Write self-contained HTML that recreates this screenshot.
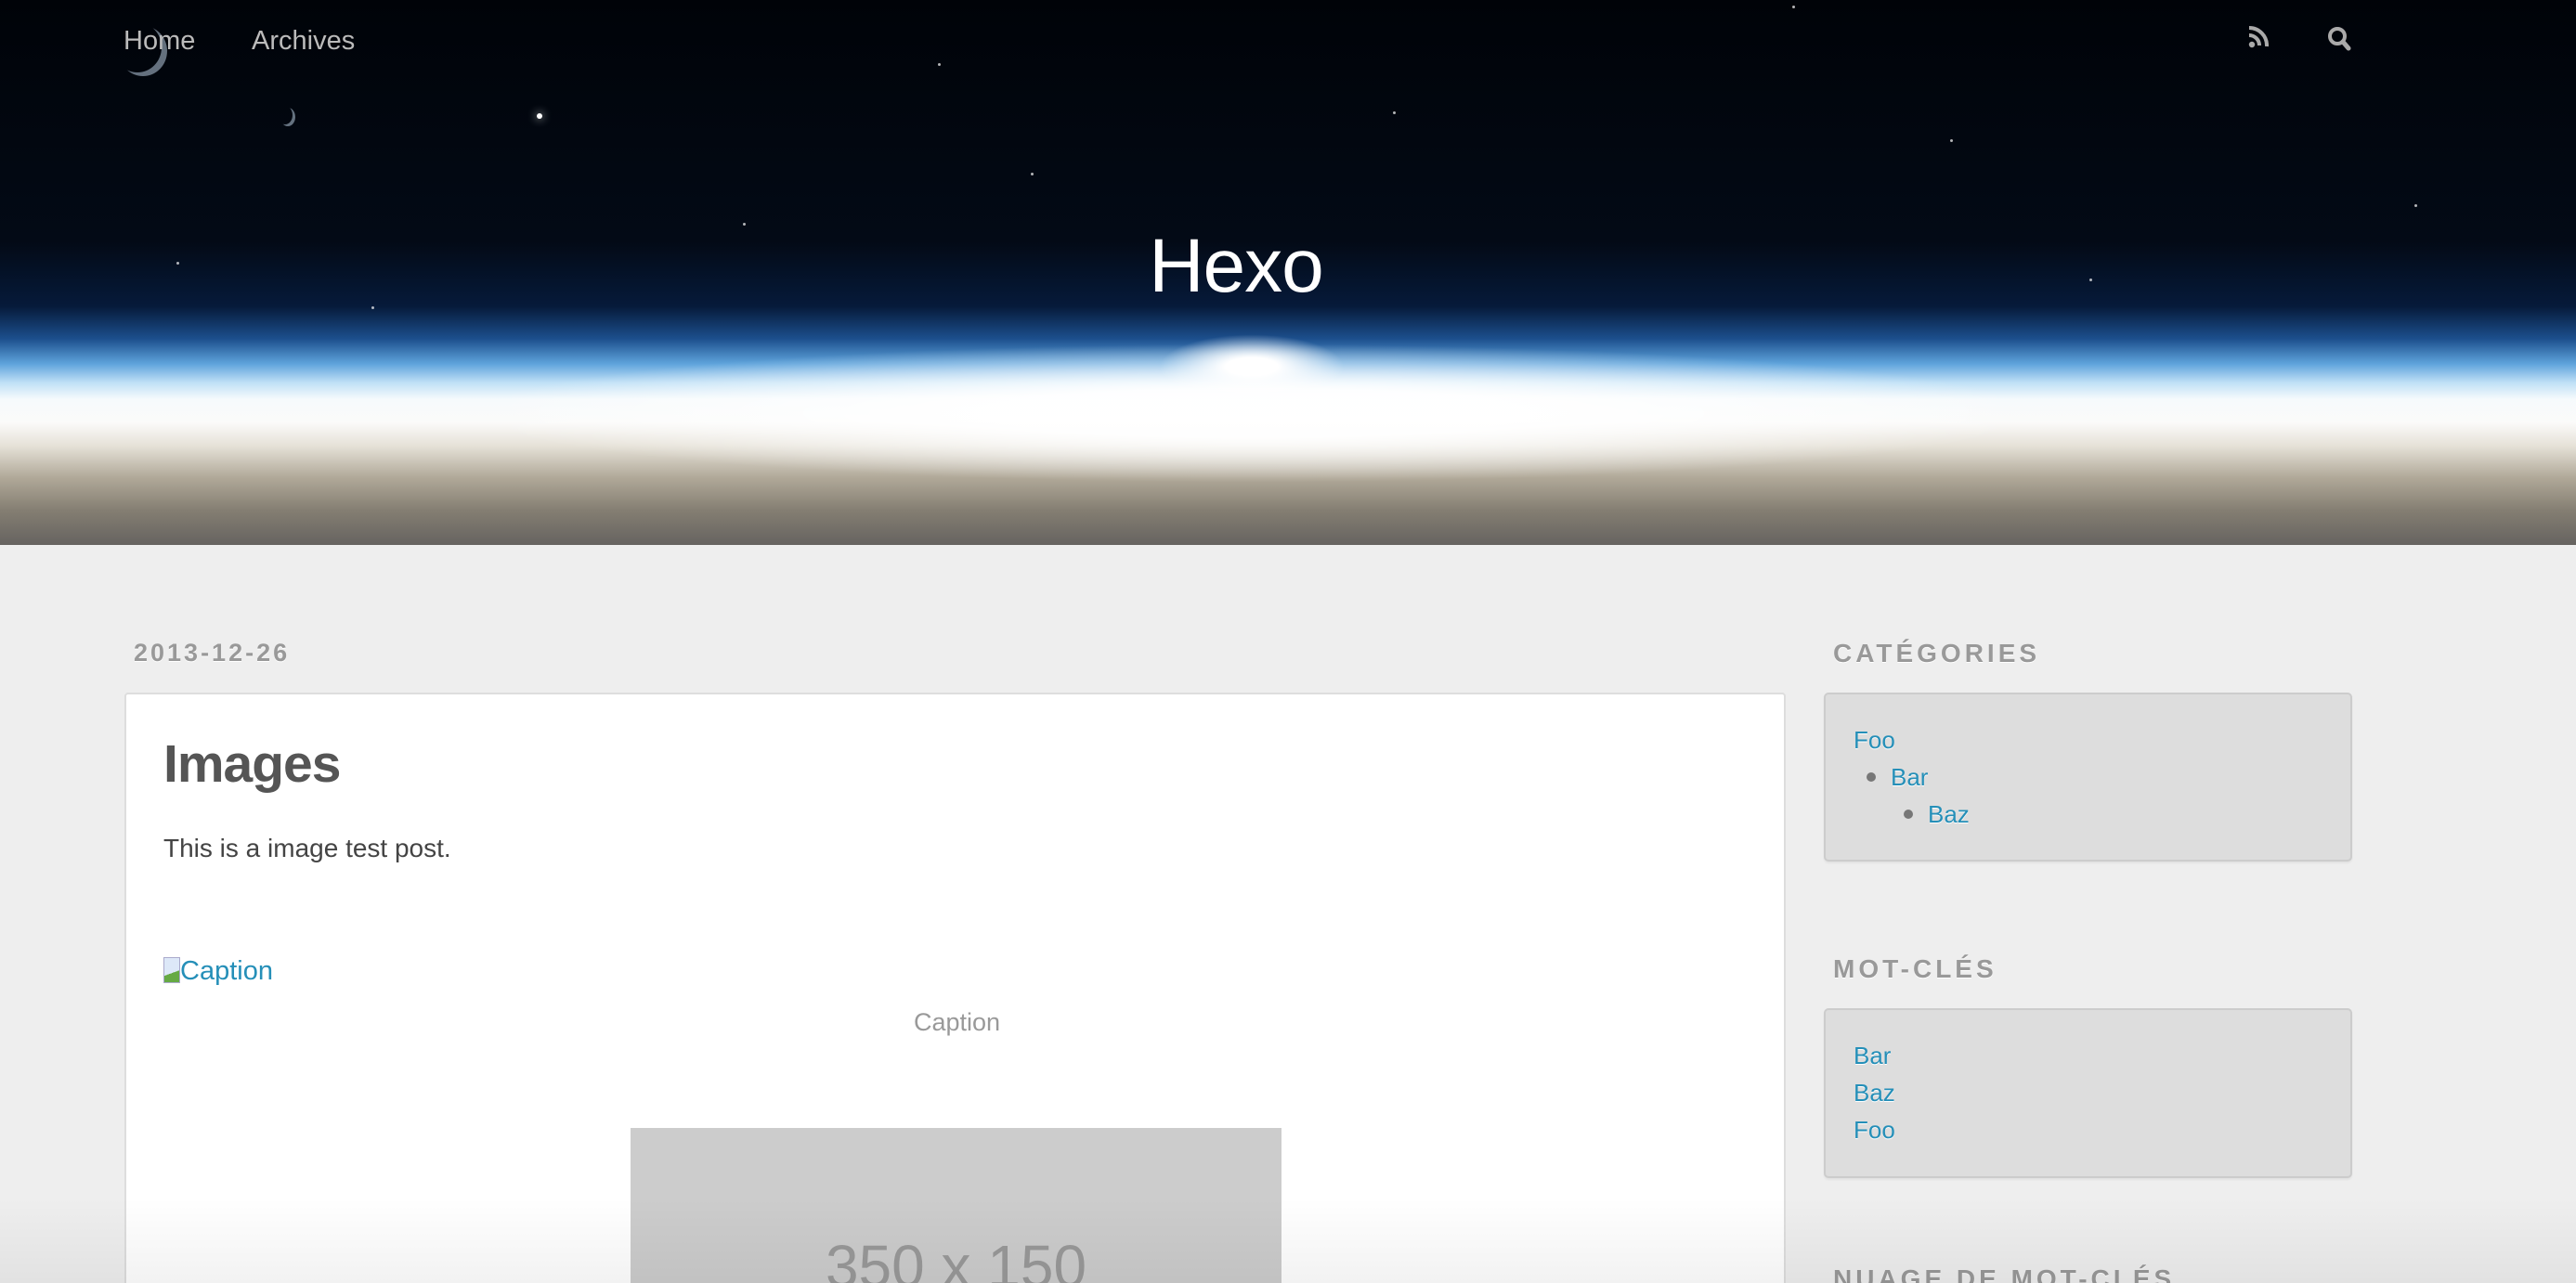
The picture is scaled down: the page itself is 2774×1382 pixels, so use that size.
<!DOCTYPE html>
<html style="width:2774px;height:1382px;overflow:hidden"><head><meta charset="utf-8"><style>
*{margin:0;padding:0;box-sizing:border-box}
body{width:2774px;height:1382px;overflow:hidden;background:#eee;font-family:"Liberation Sans",sans-serif;position:relative}
.hdr{position:absolute;left:0;top:0;width:2774px;height:587px;overflow:hidden;
background:linear-gradient(to bottom,#000308 0px,#030a16 260px,#061a3a 330px,#1c4f8d 365px,#5fa4dc 392px,#bfe0f6 412px,#f6fafc 430px,#fbfbfa 455px,#e6e2d8 480px,#b0a898 515px,#847e72 550px,#666360 587px);}
.hdr .glow{position:absolute;left:500px;top:370px;width:1700px;height:150px;border-radius:50%;background:radial-gradient(ellipse at center,rgba(255,255,255,.95) 25%,rgba(255,255,255,0) 70%)}
.hdr .core{position:absolute;left:1248px;top:360px;width:200px;height:70px;border-radius:50%;background:radial-gradient(ellipse at center,#fff 20%,rgba(255,255,255,0) 70%)}
.star{position:absolute;width:3px;height:3px;background:#fff;border-radius:50%;opacity:.7}
.nav{position:absolute;top:28px;font-size:29px;color:#bbb}
.title{position:absolute;left:0;width:2662px;text-align:center;top:240px;font-size:82px;color:#fff;letter-spacing:-1px}
.date{position:absolute;left:144px;top:688px;font-size:27px;font-weight:bold;color:#999;letter-spacing:3px;text-shadow:0 1px #fff}
.art{position:absolute;left:134px;top:746px;width:1789px;height:660px;background:#fff;border:2px solid #ddd;border-radius:4px;overflow:hidden}
.art h1{position:absolute;left:40px;top:42px;font-size:57px;color:#555;font-weight:bold;letter-spacing:-1px}
.art p{position:absolute;left:40px;top:150px;font-size:28px;color:#444}
.cap1{position:absolute;left:40px;top:282px;font-size:29px;color:#258fb8}
.cap2{position:absolute;left:0;width:1789px;text-align:center;top:338px;font-size:27px;color:#999}
.ph{position:absolute;left:543px;top:467px;width:701px;height:300px;background:#ccc;color:#999;font-size:64px;text-align:center;padding-top:112px}
.sh{position:absolute;left:1974px;font-size:28px;font-weight:bold;color:#999;letter-spacing:4px;text-shadow:0 1px #fff}
.box{position:absolute;left:1964px;width:569px;background:#ddd;border:2px solid #ccc;border-radius:5px;box-shadow:0 2px 2px rgba(0,0,0,.05)}
.lk{position:absolute;font-size:26px;color:#258fb8;text-shadow:0 1px #fff}
.dot{position:absolute;width:10px;height:10px;border-radius:50%;background:#777}
.fade{position:absolute;left:0;top:1290px;width:2774px;height:92px;background:linear-gradient(to bottom,rgba(0,0,0,0),rgba(0,0,0,.05))}
</style></head><body>
<div class="hdr">
<div class="glow"></div>
<div class="core"></div>
<div class="star" style="left:578px;top:122px;width:6px;height:6px;opacity:1;box-shadow:0 0 10px #fff"></div>
<div class="star" style="left:1110px;top:186px"></div><div class="star" style="left:400px;top:330px"></div>
<div class="star" style="left:190px;top:282px"></div><div class="star" style="left:1010px;top:68px"></div>
<div class="star" style="left:1930px;top:6px"></div><div class="star" style="left:2250px;top:300px"></div>
<div class="star" style="left:2600px;top:220px"></div><div class="star" style="left:800px;top:240px"></div>
<div class="star" style="left:1500px;top:120px"></div><div class="star" style="left:2100px;top:150px"></div>
<div style="position:absolute;left:128px;top:28px;width:52px;height:54px;border-radius:50%;box-shadow:inset -6px -4px 0 rgba(200,220,240,.5)"></div>
<div style="position:absolute;left:302px;top:116px;width:16px;height:20px;border-radius:50%;box-shadow:inset -3px -2px 0 rgba(200,220,240,.5)"></div>
<div class="nav" style="left:133px">Home</div>
<div class="nav" style="left:271px">Archives</div>
<svg style="position:absolute;left:2421px;top:28px" width="22" height="24" viewBox="0 0 22 24"><circle cx="4" cy="20" r="3.2" fill="#aaa"/><path d="M1 10a11 11 0 0 1 11 11" stroke="#aaa" stroke-width="4" fill="none"/><path d="M1 2a19 19 0 0 1 19 20" stroke="#aaa" stroke-width="4" fill="none"/></svg>
<svg style="position:absolute;left:2506px;top:28px" width="26" height="28" viewBox="0 0 26 28"><circle cx="11" cy="11" r="8" stroke="#aaa" stroke-width="4" fill="none"/><path d="M17 17l6 7" stroke="#aaa" stroke-width="5" stroke-linecap="round"/></svg>
<div class="title">Hexo</div>
</div>
<div class="date">2013-12-26</div>
<div class="art">
<h1>Images</h1>
<p>This is a image test post.</p>
<div class="cap1"><span style="display:inline-block;width:18px;height:28px;border:1px solid #aac;background:linear-gradient(160deg,#dde8f8 60%,#6a4 60%);vertical-align:-4px"></span>Caption</div>
<div class="cap2">Caption</div>
<div class="ph">350 x 150</div>
</div>
<div class="sh" style="top:688px">CATÉGORIES</div>
<div class="box" style="top:746px;height:182px">
<div class="lk" style="left:30px;top:34px">Foo</div>
<div class="dot" style="left:44px;top:84px"></div><div class="lk" style="left:70px;top:74px">Bar</div>
<div class="dot" style="left:84px;top:124px"></div><div class="lk" style="left:110px;top:114px">Baz</div>
</div>
<div class="sh" style="top:1028px">MOT-CLÉS</div>
<div class="box" style="top:1086px;height:183px">
<div class="lk" style="left:30px;top:34px">Bar</div>
<div class="lk" style="left:30px;top:74px">Baz</div>
<div class="lk" style="left:30px;top:114px">Foo</div>
</div>
<div class="sh" style="top:1362px">NUAGE DE MOT-CLÉS</div>
<div class="fade"></div>
</body></html>
